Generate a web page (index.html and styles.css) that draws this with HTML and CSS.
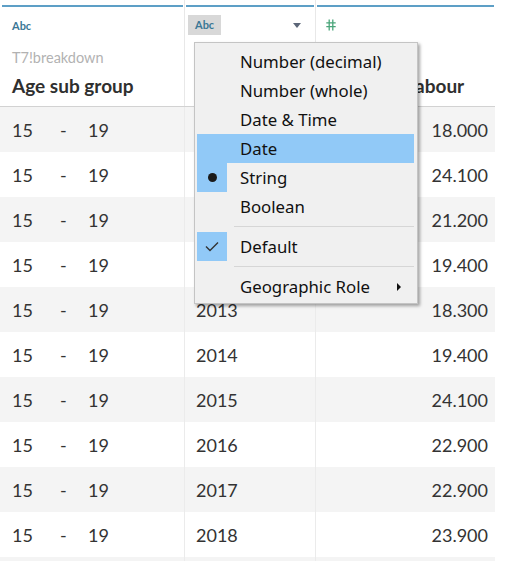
FILE: index.html
```html
<!DOCTYPE html>
<html>
<head>
<meta charset="utf-8">
<link rel="stylesheet" href="styles.css">
</head>
<body>
<div class="sheet">
  <div class="head">
    <div class="hcell">
      <div class="bar"></div>
      <div class="typerow"><span class="type">Abc</span></div>
      <div class="source">T7!breakdown</div>
      <div class="title">Age sub group</div>
    </div>
    <div class="hcell">
      <div class="bar"></div>
      <div class="typerow"><span class="type badge">Abc</span><span class="caret"></span></div>
      <div class="source"></div>
      <div class="title">Year</div>
    </div>
    <div class="hcell last">
      <div class="bar"></div>
      <div class="typerow">
        <svg class="hash" width="10" height="12" viewBox="0 0 10 12"><path d="M3.2 0.5V11.5M6.8 0.5V11.5M0.3 3.8H9.7M0.3 7.6H9.7" stroke="#4aa57a" stroke-width="1.3" fill="none"/></svg>
      </div>
      <div class="source"></div>
      <div class="title">Shares of labour</div>
    </div>
  </div>

  <div class="row alt"><div class="c1"><span class="a">15</span><span class="d">-</span><span>19</span></div><div class="c2">2009</div><div class="c3">18.000</div></div>
  <div class="row"><div class="c1"><span class="a">15</span><span class="d">-</span><span>19</span></div><div class="c2">2010</div><div class="c3">24.100</div></div>
  <div class="row alt"><div class="c1"><span class="a">15</span><span class="d">-</span><span>19</span></div><div class="c2">2011</div><div class="c3">21.200</div></div>
  <div class="row"><div class="c1"><span class="a">15</span><span class="d">-</span><span>19</span></div><div class="c2">2012</div><div class="c3">19.400</div></div>
  <div class="row alt"><div class="c1"><span class="a">15</span><span class="d">-</span><span>19</span></div><div class="c2">2013</div><div class="c3">18.300</div></div>
  <div class="row"><div class="c1"><span class="a">15</span><span class="d">-</span><span>19</span></div><div class="c2">2014</div><div class="c3">19.400</div></div>
  <div class="row alt"><div class="c1"><span class="a">15</span><span class="d">-</span><span>19</span></div><div class="c2">2015</div><div class="c3">24.100</div></div>
  <div class="row"><div class="c1"><span class="a">15</span><span class="d">-</span><span>19</span></div><div class="c2">2016</div><div class="c3">22.900</div></div>
  <div class="row alt"><div class="c1"><span class="a">15</span><span class="d">-</span><span>19</span></div><div class="c2">2017</div><div class="c3">22.900</div></div>
  <div class="row"><div class="c1"><span class="a">15</span><span class="d">-</span><span>19</span></div><div class="c2">2018</div><div class="c3">23.900</div></div>
  <div class="row alt stub"><div class="c1"></div><div class="c2"></div><div class="c3"></div></div>

  <div class="menu">
    <div class="item"><span class="ic"></span><span class="lbl">Number (decimal)</span></div>
    <div class="item"><span class="ic"></span><span class="lbl">Number (whole)</span></div>
    <div class="item"><span class="ic"></span><span class="lbl">Date &amp; Time</span></div>
    <div class="item hover"><span class="ic"></span><span class="lbl">Date</span></div>
    <div class="item"><span class="ic on"><span class="dot"></span></span><span class="lbl">String</span></div>
    <div class="item"><span class="ic"></span><span class="lbl">Boolean</span></div>
    <div class="sep"></div>
    <div class="item"><span class="ic on"><svg width="14" height="11" viewBox="0 0 14 11"><path d="M1 5.5L5 9.5L13 1.5" stroke="#333" stroke-width="1.4" fill="none"/></svg></span><span class="lbl">Default</span></div>
    <div class="sep"></div>
    <div class="item"><span class="ic"></span><span class="lbl">Geographic Role</span><span class="sub"></span></div>
  </div>
</div>
</body>
</html>
```

FILE: styles.css
```css
html, body {
  margin: 0;
  padding: 0;
  background: #fff;
}
body {
  width: 512px;
  height: 561px;
  overflow: hidden;
  font-family: Lato, "Liberation Sans", sans-serif;
  color: #333;
}
.sheet {
  position: relative;
  width: 495px;
}
.head {
  display: grid;
  grid-template-columns: 185px 131px 179px;
  height: 106px;
  border-bottom: 1px solid #d2d2d2;
}
.hcell {
  border-right: 1px solid #e8e8e8;
  display: flex;
  flex-direction: column;
  overflow: hidden;
  white-space: nowrap;
}
.hcell.last {
  border-right: none;
}
.bar {
  height: 2px;
  margin: 5px 1px 0 1px;
  background: #5d9fc6;
}
.hcell:first-child .bar {
  margin-left: 2px;
}
.typerow {
  height: 22px;
  margin-top: 7px;
  display: flex;
  align-items: center;
  padding-left: 12px;
  padding-right: 14px;
}
.type {
  font-size: 11px;
  font-weight: bold;
  color: #3b7795;
}
.badge {
  background: #d8d8d8;
  padding: 4px 7px;
  margin-left: -9px;
  line-height: 12px;
}
.caret {
  margin-left: auto;
  width: 0;
  height: 0;
  border-left: 4px solid transparent;
  border-right: 4px solid transparent;
  border-top: 5px solid #5c6678;
}
.hash {
  margin-left: -2px;
}
.source {
  height: 20px;
  margin-top: 12px;
  padding-left: 12px;
  font-size: 14.5px;
  color: #b2b2b2;
  line-height: 20px;
}
.title {
  padding-left: 12px;
  margin-top: 6px;
  font-size: 19px;
  font-weight: bold;
  color: #2f2f2f;
  line-height: 24px;
}
.row {
  display: grid;
  grid-template-columns: 185px 131px 179px;
  height: 45px;
  font-size: 18px;
  background: #fff;
}
.row.alt {
  background: #f4f4f4;
}
.row.stub {
  height: 4px;
}
.row > div {
  display: flex;
  align-items: center;
  border-right: 1px solid #ebebeb;
  white-space: nowrap;
}
.row > .c3 {
  border-right: none;
  justify-content: flex-end;
  padding-right: 7px;
}
.c1 {
  padding-left: 12px;
}
.c1 .a {
  width: 48px;
}
.c1 .d {
  width: 28px;
}
.c2 {
  padding-left: 11px;
}
.menu {
  position: absolute;
  left: 194px;
  top: 42px;
  width: 222px;
  padding: 4px 0 2px 0;
  background: #f0f0f0;
  border: 1px solid #c4c4c4;
  box-shadow: 2px 2px 3px rgba(0, 0, 0, 0.35);
  font-family: "Noto Sans", "Open Sans", sans-serif;
  font-size: 16.8px;
  color: #111;
}
.item {
  display: flex;
  align-items: center;
  height: 29px;
  margin: 0 3px 0 2px;
}
.item.hover {
  background: #91c9f7;
}
.ic {
  width: 30px;
  height: 29px;
  display: flex;
  align-items: center;
  justify-content: center;
}
.ic.on {
  background: #91c9f7;
}
.dot {
  width: 9px;
  height: 9px;
  border-radius: 50%;
  background: #1a1a1a;
}
.lbl {
  padding-left: 13px;
}
.sub {
  margin-left: auto;
  margin-right: 13px;
  width: 0;
  height: 0;
  border-top: 4px solid transparent;
  border-bottom: 4px solid transparent;
  border-left: 4px solid #111;
}
.sep {
  height: 1px;
  background: #d6d6d6;
  margin: 5px 3px 5px 39px;
}
```
